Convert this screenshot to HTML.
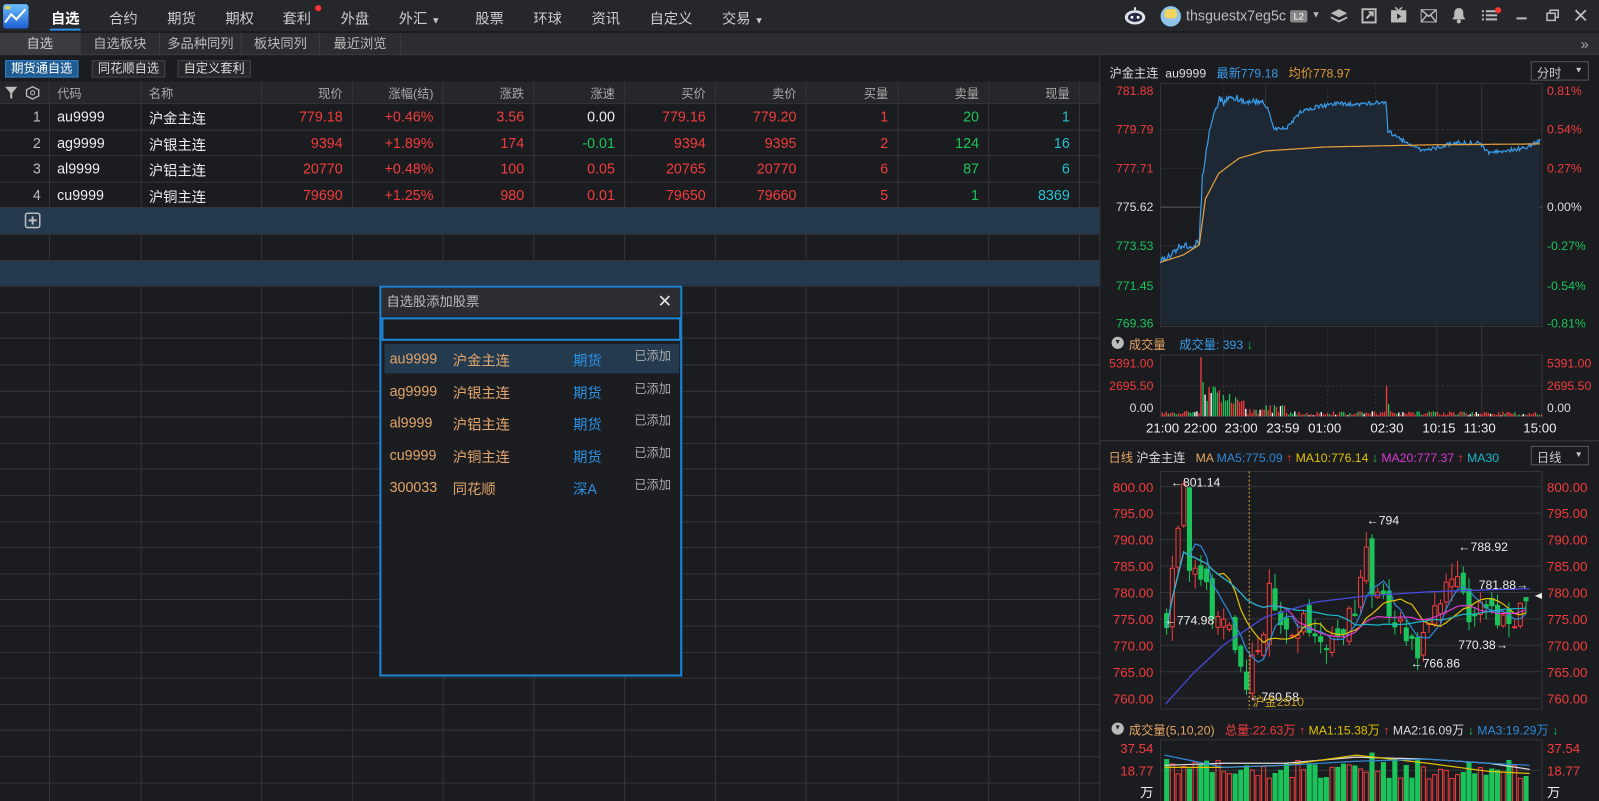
<!DOCTYPE html>
<html><head><meta charset="utf-8">
<style>
*{box-sizing:border-box;margin:0;padding:0}
html,body{width:1599px;height:801px;overflow:hidden;background:#1b1c20}
#w{position:absolute;left:0;top:0;width:1568px;height:785px;transform:scale(1.0198,1.0204);transform-origin:0 0;font-family:"Liberation Sans","Noto Sans CJK SC",sans-serif;font-size:13px;color:#ddd;background:#1b1c20;overflow:hidden}
.a{position:absolute;white-space:nowrap}
.top{position:absolute;left:0;top:0;width:1568px;height:32px;background:#26272b;border-bottom:1px solid #111}
.top .t{position:absolute;top:8px;font-size:14px;color:#ccc}
.bar2{position:absolute;left:0;top:32px;width:1568px;height:22px;background:#2c2d32;border-bottom:1px solid #3a3b40}
.bar2 .t{position:absolute;top:0;height:22px;line-height:22px;font-size:13px;color:#bbb;text-align:center;border-right:1px solid #3d3e43}
.btn{position:absolute;top:59px;height:17px;line-height:15px;font-size:12px;color:#ddd;border:1px solid #45464b;background:#26272b;padding:0 5px}
.hdr{position:absolute;left:0;top:80px;width:1078px;height:21px;background:#26272b}
.cell{position:absolute;font-size:13px}
.r{text-align:right}
.red{color:#f23c3c}.grn{color:#1bc45a}.cy{color:#25c1cf}
</style></head><body><div id="w">
<div class="top">
  <svg class="a" style="left:3px;top:4px" width="25" height="24"><rect x="0" y="0" width="25" height="24" rx="3" fill="#2f8ae0"/><rect x="0" y="0" width="25" height="24" rx="3" fill="url(#g1)"/><defs><linearGradient id="g1" x1="0" y1="0" x2="0" y2="1"><stop offset="0" stop-color="#6cc0ff"/><stop offset="1" stop-color="#1d5fd0"/></linearGradient></defs><polyline points="2,18 8,10 13,15 22,5" stroke="#fff" stroke-width="2" fill="none"/><rect x="2" y="2" width="5" height="3" fill="#f3d34a"/></svg>
  <div class="t" style="left:50px;color:#fff;font-weight:bold">自选</div>
  <div class="a" style="left:49px;top:28px;width:30px;height:2px;background:#2e8ee6"></div>
  <div class="t" style="left:107px">合约</div>
  <div class="t" style="left:164px">期货</div>
  <div class="t" style="left:221px">期权</div>
  <div class="t" style="left:277px">套利</div>
  <div class="a" style="left:309px;top:5px;width:6px;height:6px;border-radius:3px;background:#f33"></div>
  <div class="t" style="left:334px">外盘</div>
  <div class="t" style="left:391px">外汇 <span style="font-size:9px">▼</span></div>
  <div class="t" style="left:466px">股票</div>
  <div class="t" style="left:523px">环球</div>
  <div class="t" style="left:580px">资讯</div>
  <div class="t" style="left:637px">自定义</div>
  <div class="t" style="left:708px">交易 <span style="font-size:9px">▼</span></div>
  <svg class="a" style="left:1102px;top:7px" width="22" height="18"><ellipse cx="11" cy="10" rx="10" ry="7" fill="#dfe2ea"/><ellipse cx="11" cy="10" rx="7" ry="4.5" fill="#272a45"/><circle cx="8" cy="10" r="1.4" fill="#fff"/><circle cx="14" cy="10" r="1.4" fill="#fff"/><rect x="10" y="0" width="2" height="3" fill="#dfe2ea"/></svg>
  <div class="a" style="left:1138px;top:6px;width:20px;height:20px;border-radius:10px;background:#8fc5ea"></div>
  <div class="a" style="left:1142px;top:9px;width:12px;height:9px;border-radius:3px;background:#f5d35a"></div>
  <div class="t" style="left:1163px;top:7px;font-size:14px;color:#bbb;width:101px;overflow:hidden">thsguestx7eg5c</div>
  <div class="a" style="left:1265px;top:10px;width:17px;height:12px;background:#888;border-radius:2px;font-size:9px;color:#fff;text-align:center;line-height:12px">L2</div>
  <div class="a" style="left:1286px;top:9px;font-size:9px;color:#bbb">▼</div>
  <svg class="a" style="left:1304px;top:7px" width="18" height="18" fill="#bbb"><path d="M9 2 L17 6 L9 10 L1 6Z"/><path d="M1 9 L9 13 L17 9 L17 11 L9 15 L1 11Z"/></svg>
  <svg class="a" style="left:1335px;top:8px" width="15" height="15" fill="none" stroke="#bbb" stroke-width="2"><rect x="1" y="1" width="13" height="13"/><path d="M5 10 L11 4 M7 4 L11 4 L11 8"/></svg>
  <svg class="a" style="left:1363px;top:7px" width="17" height="16"><rect x="1" y="3" width="15" height="12" fill="#bbb"/><path d="M7 6 L11 9 L7 12Z" fill="#26272b"/><path d="M5 0 L8 3 M12 0 L9 3" stroke="#bbb" stroke-width="1.5"/></svg>
  <svg class="a" style="left:1393px;top:9px" width="16" height="13"><rect x="0.5" y="0.5" width="15" height="12" fill="none" stroke="#bbb"/><path d="M1 1 L8 7 L15 1 M1 12 L6 6 M15 12 L10 6" stroke="#bbb" stroke-width="1.5" fill="none"/></svg>
  <svg class="a" style="left:1423px;top:7px" width="15" height="17" fill="#bbb"><path d="M7.5 1 C3 1 3 5 3 9 L1 12 L14 12 L12 9 C12 5 12 1 7.5 1Z"/><circle cx="7.5" cy="14" r="2"/></svg>
  <svg class="a" style="left:1453px;top:9px" width="16" height="13" fill="#bbb"><rect x="0" y="1" width="2" height="2"/><rect x="4" y="1" width="11" height="2"/><rect x="0" y="5" width="2" height="2"/><rect x="4" y="5" width="11" height="2"/><rect x="0" y="9" width="2" height="2"/><rect x="4" y="9" width="11" height="2"/></svg>
  <div class="a" style="left:1466px;top:7px;width:6px;height:6px;border-radius:3px;background:#f33"></div>
  <div class="a" style="left:1487px;top:17px;width:10px;height:2px;background:#bbb"></div>
  <svg class="a" style="left:1516px;top:9px" width="13" height="12" fill="none" stroke="#bbb" stroke-width="1.5"><rect x="1" y="4" width="8" height="7"/><path d="M4 4 V1 H12 V8 H9"/></svg>
  <svg class="a" style="left:1544px;top:9px" width="12" height="12" stroke="#bbb" stroke-width="1.8"><path d="M1 1 L11 11 M11 1 L1 11"/></svg>
</div>
<div class="bar2">
  <div class="t" style="left:0;width:79px;background:#3b3c41;color:#ccc">自选</div>
  <div class="t" style="left:79px;width:78px">自选板块</div>
  <div class="t" style="left:157px;width:80px">多品种同列</div>
  <div class="t" style="left:237px;width:77px">板块同列</div>
  <div class="t" style="left:314px;width:79px">最近浏览</div>
  <div class="a" style="left:1550px;top:0;line-height:22px;color:#aaa;font-size:14px">»</div>
</div>
<div class="btn" style="left:5px;background:#1f5b91;border-color:#2b86d6;color:#fff">期货通自选</div>
<div class="btn" style="left:90px">同花顺自选</div>
<div class="btn" style="left:174px">自定义套利</div>

<div class="hdr"></div>
<div id="tbl"></div>

<div class="a" style="left:1078px;top:54px;width:1px;height:731px;background:#3a3b40"></div>
<div class="a" style="left:1079px;top:54px;width:489px;height:731px;background:#1b1c20"></div>
<svg id="ch" class="a" style="left:0;top:0" width="1568" height="785"></svg>

<div class="a" style="left:1088px;top:63px;font-size:12px;color:#ddd">沪金主连 &nbsp;au9999 &nbsp;&nbsp;<span style="color:#3a9be8">最新779.18</span> &nbsp;&nbsp;<span style="color:#e09a3c">均价778.97</span></div>
<div class="a" style="left:1501px;top:60px;width:57px;height:19px;border:1px solid #55565b;font-size:12px;color:#ccc;padding:2px 0 0 5px">分时<span style="position:absolute;right:5px;top:3px;font-size:8px">▼</span></div>
<div class="a" style="left:1501px;top:437px;width:57px;height:19px;border:1px solid #55565b;font-size:12px;color:#ccc;padding:2px 0 0 5px">日线<span style="position:absolute;right:5px;top:3px;font-size:8px">▼</span></div>
<div class="a" style="left:1090px;top:330px;width:12px;height:12px;border-radius:6px;background:#bbb;color:#222;font-size:7px;text-align:center;line-height:12px">▼</div>
<div class="a" style="left:1107px;top:329px;font-size:12px;color:#e5a562">成交量 &nbsp;&nbsp;&nbsp;<span style="color:#3a9be8">成交量: 393</span> <span style="color:#1bc45a">↓</span></div>
<div class="a" style="left:1087px;top:440px;font-size:12px;color:#e5a562">日线 <span style="color:#ddd">沪金主连</span> &nbsp;&nbsp;MA <span style="color:#2f88d8">MA5:775.09</span> <span style="color:#f33">↑</span> <span style="color:#e0c000">MA10:776.14</span> <span style="color:#1bc45a">↓</span> <span style="color:#d83ad0">MA20:777.37</span> <span style="color:#f33">↑</span> <span style="color:#1ab8c8">MA30</span></div>
<div class="a" style="left:1090px;top:708px;width:12px;height:12px;border-radius:6px;background:#bbb;color:#222;font-size:7px;text-align:center;line-height:12px">▼</div>
<div class="a" style="left:1107px;top:707px;font-size:12px;color:#e5a562">成交量(5,10,20) &nbsp;&nbsp;<span style="color:#f23c3c">总量:22.63万 ↑</span> <span style="color:#e0c000">MA1:15.38万</span> <span style="color:#f33">↑</span> <span style="color:#ddd">MA2:16.09万</span> <span style="color:#1bc45a">↓</span> <span style="color:#2f88d8">MA3:19.29万</span> <span style="color:#1bc45a">↓</span></div>

<!-- dialog -->
<div class="a" style="left:372px;top:280px;width:297px;height:383px;border:2px solid #1e86d6;background:#1c1d21">
  <div class="a" style="left:0;top:0;width:293px;height:28px;background:#2c2d32;color:#bbb;font-size:13px;line-height:28px;padding-left:5px">自选股添加股票<span style="position:absolute;right:8px;top:0;font-size:17px;color:#ddd">✕</span></div>
  <div class="a" style="left:0;top:29px;width:294px;height:23px;border:2px solid #1e86d6;background:#1b1c20"></div>
  <div class="a" style="left:3px;top:55px;width:289px;height:29px;background:#243a4f"></div>
  <div id="dl"></div>
</div>
<script>
(function(){
var T=document.getElementById('tbl'),h='';
var cols=[0,48,138,256,345,434,523,612,701,790,880,969,1058,1078];
// grid
for(var i=1;i<cols.length-1;i++)h+='<div class="a" style="left:'+cols[i]+'px;top:80px;width:1px;height:705px;background:#34353a"></div>';
var rowsY=[];for(var y=101;y<790;y+=25.6)rowsY.push(y);
rowsY.forEach(function(y,i){
 if(i==4||i==6)h+='<div class="a" style="left:0;top:'+y+'px;width:1078px;height:25.6px;background:#233a4f"></div>';
 h+='<div class="a" style="left:0;top:'+Math.round(y)+'px;width:1078px;height:1px;background:#34353a"></div>';
});
var hd=['代码','名称','现价','涨幅(结)','涨跌','涨速','买价','卖价','买量','卖量','现量'];
h+='<svg class="a" style="left:4px;top:84px" width="36" height="14"><path d="M1 1 H13 L8 7 V13 L6 12 V7Z" fill="#bbb"/><path d="M28 1 L34 4 V10 L28 13 L22 10 V4Z" fill="none" stroke="#bbb" stroke-width="1.3"/><circle cx="28" cy="7" r="2" fill="none" stroke="#bbb"/></svg>';
hd.forEach(function(t,i){var l=cols[i+1],w=cols[i+2]-l;
 if(i<2)h+='<div class="cell" style="left:'+(l+8)+'px;top:83px;color:#aaa;font-size:12px">'+t+'</div>';
 else h+='<div class="cell r" style="left:'+l+'px;width:'+(w-9)+'px;top:83px;color:#aaa;font-size:12px">'+t+'</div>';});
var D=[['au9999','沪金主连','779.18','+0.46%','3.56','0.00','779.16','779.20','1','20','1'],
['ag9999','沪银主连','9394','+1.89%','174','-0.01','9394','9395','2','124','16'],
['al9999','沪铝主连','20770','+0.48%','100','0.05','20765','20770','6','87','6'],
['cu9999','沪铜主连','79690','+1.25%','980','0.01','79650','79660','5','1','8369']];
var C=[[0,0,'red','red','red','w','red','red','red','grn','cy'],[0,0,'red','red','red','grn','red','red','red','grn','cy'],[0,0,'red','red','red','red','red','red','red','grn','cy'],[0,0,'red','red','red','red','red','red','red','grn','cy']];
D.forEach(function(r,k){var y=rowsY[k]+5;
 h+='<div class="cell r" style="left:0;width:40px;top:'+y+'px;color:#bbb;font-size:14px">'+(k+1)+'</div>';
 r.forEach(function(t,i){var l=cols[i+1],w=cols[i+2]-l;
  if(i<2)h+='<div class="cell" style="left:'+(l+8)+'px;top:'+y+'px;color:#eee;font-size:14px">'+t+'</div>';
  else{var c=C[k][i];h+='<div class="cell r '+(c=='w'?'':c)+'" style="left:'+l+'px;width:'+(w-9)+'px;top:'+y+'px;font-size:14px;'+(c=='w'?'color:#eee':'')+'">'+t+'</div>';}
 });});
h+='<svg class="a" style="left:24px;top:208px" width="16" height="16"><rect x="1" y="1" width="14" height="14" rx="2" fill="none" stroke="#bbb" stroke-width="1.5"/><path d="M8 4 V12 M4 8 H12" stroke="#bbb" stroke-width="2"/></svg>';
T.innerHTML=h;
// dialog list
var L=[['au9999','沪金主连','期货'],['ag9999','沪银主连','期货'],['al9999','沪铝主连','期货'],['cu9999','沪铜主连','期货'],['300033','同花顺','深A']],g='';
L.forEach(function(r,i){var y=61+i*31.5;
 g+='<div class="a" style="left:8px;top:'+y+'px;font-size:14px;color:#e3a66a">'+r[0]+'</div><div class="a" style="left:70px;top:'+y+'px;font-size:14px;color:#e3a66a">'+r[1]+'</div><div class="a" style="left:188px;top:'+y+'px;font-size:14px;color:#2a92e6">'+r[2]+'</div><div class="a" style="left:248px;top:'+(y-3)+'px;font-size:12px;color:#aaa">已添加</div>';});
document.getElementById('dl').innerHTML=g;

// charts
var s=0x1234567;function rnd(){s^=s<<13;s^=s>>>17;s^=s<<5;return ((s>>>0)%10000)/10000;}
var S='';
function ln(x1,y1,x2,y2,c,d){S+='<line x1="'+x1+'" y1="'+y1+'" x2="'+x2+'" y2="'+y2+'" stroke="'+c+'"'+(d?' stroke-dasharray="2,2"':'')+'/>';}
function tx(x,y,t,c,a,fs){S+='<text x="'+x+'" y="'+y+'" fill="'+c+'" font-size="'+(fs||12)+'" text-anchor="'+(a||'start')+'" font-family="Liberation Sans,Noto Sans CJK SC,sans-serif">'+t+'</text>';}
var X0=1138,X1=1512,G='#34353a';
// intraday frame
S+='<rect x="'+X0+'" y="82" width="'+(X1-X0)+'" height="238" fill="none" stroke="'+G+'"/>';
[127,165,203,241,280].forEach(function(y,i){ln(X0,y,X1,y,G,i!=2);});
ln(X0,203,X1,203,'#55565b');
var vx=[1200,1241,1349,1409,1453];vx.forEach(function(x,i){ln(x,82,x,408,G,i==0||i==2);});
ln(1302,82,1302,408,G,true);
var lv=[['781.88',89,'#f23c3c','0.81%'],['779.79',127,'#f23c3c','0.54%'],['777.71',165,'#f23c3c','0.27%'],['775.62',203,'#ddd','0.00%'],['773.53',241,'#1bc45a','-0.27%'],['771.45',280,'#1bc45a','-0.54%'],['769.36',317,'#1bc45a','-0.81%']];
lv.forEach(function(r){tx(1131,r[1]+4,r[0],r[2],'end');tx(1517,r[1]+4,r[3],r[2]);});
function interp(P,x){for(var i=0;i<P.length-1;i++)if(x>=P[i][0]&&x<=P[i+1][0]){var t=(x-P[i][0])/(P[i+1][0]-P[i][0]);return P[i][1]+t*(P[i+1][1]-P[i][1]);}return P[P.length-1][1];}
var PP=[[1138,255],[1150,248],[1160,240],[1170,243],[1176,235],[1179,175],[1186,125],[1192,105],[1196,97],[1200,100],[1210,95],[1220,98],[1240,100],[1245,110],[1250,127],[1262,125],[1268,118],[1275,110],[1290,105],[1310,102],[1330,102],[1357,100],[1359,100],[1361,128],[1370,135],[1380,140],[1395,148],[1410,145],[1425,140],[1440,140],[1450,140],[1460,150],[1475,148],[1495,145],[1510,138]];
var AP=[[1138,257],[1160,250],[1176,240],[1182,195],[1195,170],[1215,155],[1240,148],[1300,144],[1400,142],[1512,141]];
var pts=[],ap=[];for(var x=X0;x<=1510;x+=1){var y=interp(PP,x)+(rnd()-0.5)*(x<1250?7:4);pts.push(x+','+y.toFixed(1));ap.push(x+','+interp(AP,x).toFixed(1));}
S+='<polygon points="'+X0+',318 '+pts.join(' ')+' 1510,318" fill="#1e2835"/>';
S+='<polyline points="'+pts.join(' ')+'" fill="none" stroke="#3a9be8" stroke-width="1.2"/>';
S+='<polyline points="'+ap.join(' ')+'" fill="none" stroke="#e5a03a" stroke-width="1.2"/>';
// intraday volume
S+='<rect x="'+X0+'" y="348" width="'+(X1-X0)+'" height="60" fill="none" stroke="'+G+'"/>';
ln(X0,378,X1,378,G,true);
[['5391.00',356],['2695.50',378],['0.00',400]].forEach(function(r,i){tx(1131,r[1]+4,r[0],i==2?'#ddd':'#f23c3c','end');tx(1517,r[1]+4,r[0],i==2?'#ddd':'#f23c3c');});
for(var x=X0+1;x<X1;x+=2){var hgt;
 if(x>=1176&&x<1220)hgt=(x<1179?58:12+rnd()*30*(1-(x-1176)/50));
 else if(x>=1220&&x<1260)hgt=2+rnd()*10;
 else if(x>=1358&&x<1362)hgt=x<1360?30:12;
 else hgt=1+rnd()*(x<1176?6:4);
 S+='<rect x="'+x+'" y="'+(408-hgt)+'" width="1.3" height="'+hgt+'" fill="'+(rnd()<0.6?'#f23c3c':(rnd()<0.7?'#1bc45a':'#fff'))+'"/>';}
[['21:00',1140],['22:00',1177],['23:00',1217],['23:59',1258],['01:00',1299],['02:30',1360],['10:15',1411],['11:30',1451],['15:00',1510]].forEach(function(r){tx(r[1],424,r[0],'#eee','middle',13);});
ln(1079,432,1568,432,'#3a3b40');
// kline
S+='<rect x="'+X0+'" y="462" width="'+(X1-X0)+'" height="233" fill="none" stroke="'+G+'"/>';
var kl=[800,795,790,785,780,775,770,765,760];
kl.forEach(function(p,i){var y=477+i*25.9;ln(X0,y,X1,y,G);tx(1131,y+5,p.toFixed(2),'#f23c3c','end',13);tx(1517,y+5,p.toFixed(2),'#f23c3c','start',13);});
function py(p){return 477+(800-p)*5.18;}
var anc=[[0,776],[2,790],[3,798],[4,786],[6,782],[8,778],[10,772],[12,770],[14,764],[16,769],[18,779],[20,776],[23,774],[26,772],[29,769],[31,774],[33,777],[35,787],[36,780],[38,778],[40,774],[42,772],[44,769],[46,772],[48,778],[50,784],[51,780],[53,777],[56,776],[59,773],[62,775],[63,778]];
var N=64,cl=[];for(var i=0;i<N;i++)cl.push(interp(anc,i)+(rnd()-0.5)*6);
var op=[776];for(var i=1;i<N;i++)op.push(cl[i-1]+(rnd()-0.5)*4);
var sp=(1500-1142)/N;
for(var i=0;i<N;i++){var x=1142+i*sp,o=op[i],c=cl[i],hi=Math.max(o,c)+rnd()*3,lo=Math.min(o,c)-rnd()*3;
 if(i==3)hi=801.1;if(i==14)lo=760.6;
 var up=c>=o,col=up?'#f23c3c':'#1bc45a';
 ln(x+2,py(hi),x+2,py(lo),col);
 var yt=py(Math.max(o,c)),hh=Math.max(1,py(Math.min(o,c))-yt);
 S+='<rect x="'+x+'" y="'+yt+'" width="4" height="'+hh+'" fill="'+(up?'#1b1c20':col)+'" stroke="'+col+'"/>';}
function ma(n,c){var p=[];for(var i=0;i<N;i++){var a=0,k=0;for(var j=Math.max(0,i-n+1);j<=i;j++){a+=cl[j];k++;}p.push((1144+i*sp)+','+py(a/k).toFixed(1));}S+='<polyline points="'+p.join(' ')+'" fill="none" stroke="'+c+'" stroke-width="1.2"/>';}
ma(5,'#2f88d8');ma(10,'#e0c000');ma(20,'#d83ad0');ma(30,'#1ab8c8');
S+='<polyline points="1143,690 1170,660 1200,632 1240,605 1290,590 1340,584 1400,580 1460,578 1500,577" fill="none" stroke="#4a4ae0" stroke-width="1.2"/>';
ln(1225,462,1225,695,'#e0a040',true);
tx(1148,477,'←801.14','#eee','start',12);tx(1340,514,'←794','#eee','start',12);tx(1430,540,'←788.92','#eee','start',12);
tx(1450,577,'781.88→','#eee','start',12);tx(1142,612,'←774.98','#eee','start',12);tx(1430,636,'770.38→','#eee','start',12);
tx(1383,654,'←766.86','#eee','start',12);tx(1225,687,'←760.58','#eee','start',12);tx(1228,692,'沪金2510','#c9a020','start',12);
S+='<path d="M1505 584 L1512 581 L1512 587Z" fill="#eee"/>';
// bottom volume
S+='<rect x="'+X0+'" y="725" width="'+(X1-X0)+'" height="70" fill="none" stroke="'+G+'"/>';
ln(X0,755,X1,755,G);
tx(1131,738,'37.54','#f23c3c','end',13);tx(1517,738,'37.54','#f23c3c','start',13);
tx(1131,760,'18.77','#f23c3c','end',13);tx(1517,760,'18.77','#f23c3c','start',13);
tx(1131,781,'万','#eee','end',13);tx(1517,781,'万','#eee','start',13);
var vp=[];for(var i=0;i<N;i++){var x=1142+i*sp,hgt=22+rnd()*20;if(i==36)hgt=48;var up=cl[i]>=op[i],col=up?'#f23c3c':'#1bc45a';
 S+='<rect x="'+x+'" y="'+(786-hgt)+'" width="4" height="'+hgt+'" fill="'+(up?'none':col)+'" stroke="'+col+'"/>';}
S+='<polyline points="1142,750 1200,748 1260,748 1330,742 1400,744 1460,748 1500,754" fill="none" stroke="#ddd" stroke-width="1.2"/>';
S+='<polyline points="1142,752 1200,752 1260,750 1330,740 1400,748 1460,756 1500,758" fill="none" stroke="#e0c000" stroke-width="1.2"/>';
S+='<polyline points="1142,740 1200,752 1260,750 1330,746 1400,744 1460,748 1500,750" fill="none" stroke="#2f88d8" stroke-width="1.2"/>';
document.getElementById('ch').innerHTML=S;
})();
</script>
</div></body></html>
